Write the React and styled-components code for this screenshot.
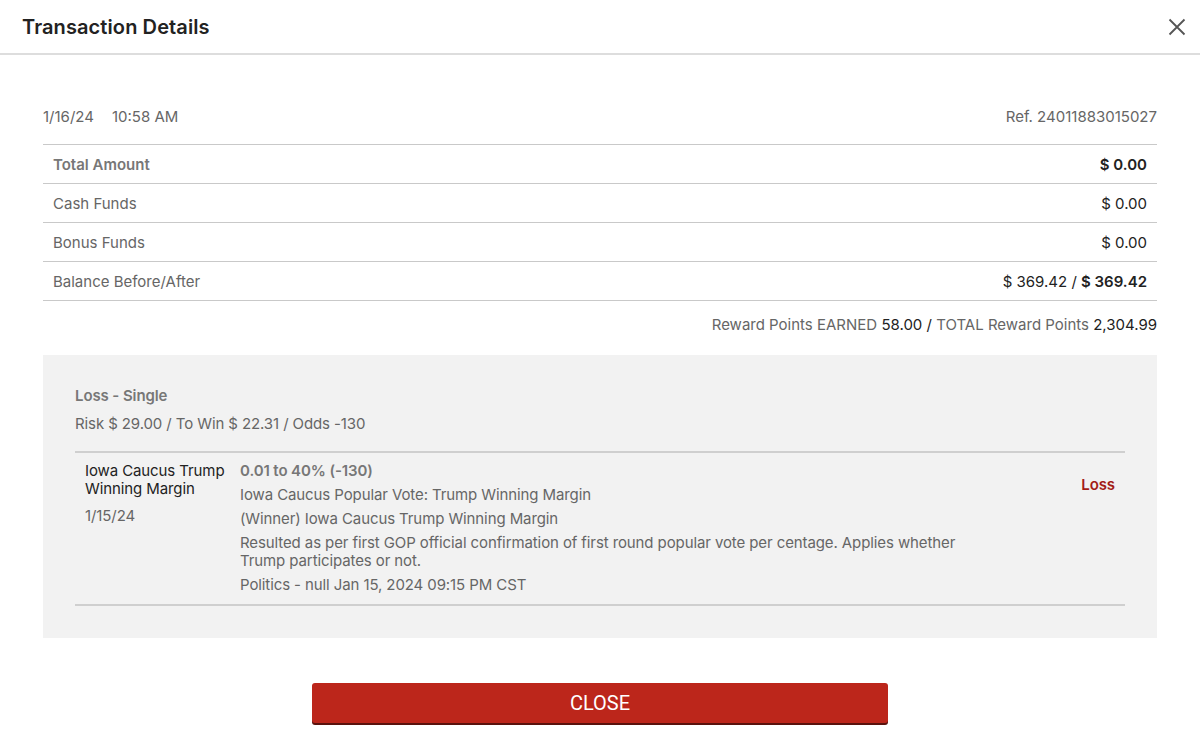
import React from 'react';
import styled, { createGlobalStyle } from 'styled-components';

const GlobalStyle = createGlobalStyle`
  body {
    margin: 0;
    background: #fff;
    font-family: Inter, "Noto Sans", sans-serif;
    color: #666;
  }
`;

const Modal = styled.div`
  width: 1200px;
  height: 738px;
  background: #fff;
  overflow: hidden;
`;

const Header = styled.div`
  height: 53px;
  display: flex;
  align-items: center;
  justify-content: space-between;
  padding: 0 14px 0 22px;
  border-bottom: 2px solid #ddd;
`;

const Title = styled.h2`
  margin: 0;
  font-size: 20px;
  font-weight: 600;
  color: #222;
  letter-spacing: 0.1px;
`;

const CloseIcon = styled.button`
  border: 0;
  background: none;
  padding: 0;
  width: 18px;
  height: 18px;
  display: flex;
  cursor: pointer;
`;

const Body = styled.div`
  padding: 49px 43px 0;
`;

const TopLine = styled.div`
  display: flex;
  justify-content: space-between;
  font-size: 15px;
  height: 24px;
  align-items: center;
  margin-bottom: 16px;
`;

const DateGroup = styled.div`
  display: flex;
  gap: 18px;
`;

const Table = styled.div`
  border-top: 1px solid #c9c9c9;
`;

const Row = styled.div`
  display: flex;
  justify-content: space-between;
  align-items: center;
  height: 38px;
  padding: 0 10px;
  border-bottom: 1px solid #c9c9c9;
  font-size: 15px;
  font-weight: ${p => (p.$bold ? 600 : 400)};
  color: ${p => (p.$bold ? '#777' : '#666')};
`;

const Strong = styled.span`
  font-weight: 600;
  color: #222;
`;

const Dark = styled.span`
  color: #222;
`;

const Reward = styled.div`
  text-align: right;
  font-size: 15px;
  padding: 14px 0 21px;
`;

const BetBox = styled.div`
  background: #f2f2f2;
  padding: 30px 32px 32px;
  letter-spacing: -0.1px;
`;

const BetTitle = styled.div`
  font-size: 15px;
  font-weight: 600;
  color: #777;
  line-height: 22px;
`;

const BetInfo = styled.div`
  font-size: 15px;
  line-height: 22px;
  margin-top: 6px;
  padding-bottom: 16px;
  border-bottom: 2px solid #cfcfcf;
`;

const Leg = styled.div`
  display: grid;
  grid-template-columns: 155px 1fr 120px;
  padding: 9px 10px 10px;
  border-bottom: 2px solid #cfcfcf;
  font-size: 15px;
`;

const LegEvent = styled.div`
  color: #222;
  line-height: 18px;
`;

const LegDate = styled.div`
  color: #666;
  margin-top: 8px;
`;

const LegDetails = styled.div`
  display: flex;
  flex-direction: column;
  gap: 6px;
  line-height: 18px;
  padding-right: 20px;
`;

const Pick = styled.div`
  font-weight: 600;
  color: #777;
`;

const Result = styled.div`
  text-align: right;
  color: #a31d17;
  font-weight: 600;
  padding-top: 13px;
`;

const Footer = styled.div`
  display: flex;
  justify-content: center;
  padding-top: 45px;
`;

const CloseButton = styled.button`
  width: 576px;
  height: 40px;
  border: 0;
  border-radius: 3px;
  background: #bc261b;
  box-shadow: 0 2px 0 #5a120d;
  color: #fff;
  font-family: Roboto, "Liberation Sans", sans-serif;
  font-size: 20px;
  cursor: pointer;
`;

export default function App() {
  return (
    <Modal>
      <GlobalStyle />
      <Header>
        <Title>Transaction Details</Title>
        <CloseIcon aria-label="close">
          <svg width="18" height="18" viewBox="0 0 18 18">
            <path d="M1.5 1.5 L16.5 16.5 M16.5 1.5 L1.5 16.5" stroke="#555" strokeWidth="1.8" />
          </svg>
        </CloseIcon>
      </Header>
      <Body>
        <TopLine>
          <DateGroup>
            <span>1/16/24</span>
            <span>10:58 AM</span>
          </DateGroup>
          <span>Ref. 24011883015027</span>
        </TopLine>
        <Table>
          <Row $bold>
            <span>Total Amount</span>
            <Strong>$ 0.00</Strong>
          </Row>
          <Row>
            <span>Cash Funds</span>
            <Dark>$ 0.00</Dark>
          </Row>
          <Row>
            <span>Bonus Funds</span>
            <Dark>$ 0.00</Dark>
          </Row>
          <Row>
            <span>Balance Before/After</span>
            <span><Dark>$ 369.42 / </Dark><Strong>$ 369.42</Strong></span>
          </Row>
        </Table>
        <Reward>
          Reward Points EARNED <Dark>58.00 /</Dark> TOTAL Reward Points <Dark>2,304.99</Dark>
        </Reward>
        <BetBox>
          <BetTitle>Loss - Single</BetTitle>
          <BetInfo>Risk $ 29.00 / To Win $ 22.31 / Odds -130</BetInfo>
          <Leg>
            <div>
              <LegEvent>Iowa Caucus Trump Winning Margin</LegEvent>
              <LegDate>1/15/24</LegDate>
            </div>
            <LegDetails>
              <Pick>0.01 to 40% (-130)</Pick>
              <div>Iowa Caucus Popular Vote: Trump Winning Margin</div>
              <div>(Winner) Iowa Caucus Trump Winning Margin</div>
              <div>Resulted as per first GOP official confirmation of first round popular vote per centage. Applies whether Trump participates or not.</div>
              <div>Politics - null Jan 15, 2024 09:15 PM CST</div>
            </LegDetails>
            <Result>Loss</Result>
          </Leg>
        </BetBox>
      </Body>
      <Footer>
        <CloseButton>CLOSE</CloseButton>
      </Footer>
    </Modal>
  );
}
